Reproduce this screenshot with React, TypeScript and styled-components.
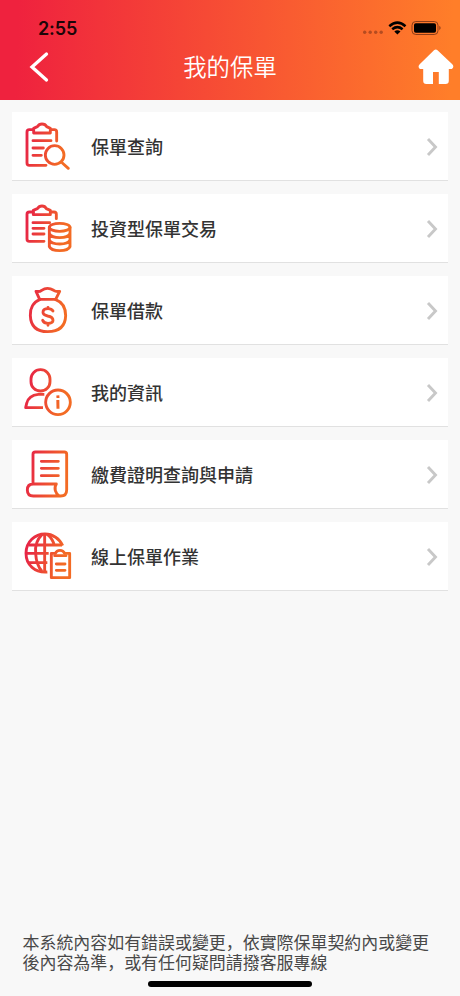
import React from "react";
import styled, { createGlobalStyle } from "styled-components";

const GlobalStyle = createGlobalStyle`
  * { box-sizing: border-box; }
  body {
    margin: 0;
    background: #f8f8f8;
    font-family: "Noto Sans CJK TC", sans-serif;
  }
`;

const Screen = styled.div`
  display: flex;
  flex-direction: column;
  width: 460px;
  height: 996px;
  overflow: hidden;
  background: #f8f8f8;
`;

const Header = styled.header`
  height: 100px;
  background: linear-gradient(92deg, #ef223e 4%, #ff7e29 98%);
`;

const StatusBar = styled.div`
  display: flex;
  justify-content: space-between;
  align-items: center;
  height: 36px;
  padding: 20px 19px 0 38px;
`;

const Clock = styled.span`
  padding-top: 2px;
  font: 600 18px/20px Inter, sans-serif;
  letter-spacing: -0.1px;
  color: #1c0508;
`;

const NavBar = styled.nav`
  display: grid;
  grid-template-columns: 60px 1fr 60px;
  align-items: center;
  height: 64px;
`;

const NavButton = styled.button`
  display: block;
  width: 60px;
  height: 64px;
  padding: 0;
  border: 0;
  background: none;
`;

const Title = styled.h1`
  margin: 0;
  padding-bottom: 3px;
  text-align: center;
  font-size: 23.4px;
  font-weight: 350;
  line-height: 61px;
  color: #fff;
`;

const List = styled.main`
  display: flex;
  flex-direction: column;
  gap: 13px;
  padding: 12px 12px 0;
`;

const Row = styled.div`
  display: flex;
  align-items: center;
  height: 69px;
  background: #fff;
  border-bottom: 1px solid #e1e1e1;
`;

const RowIcon = styled.svg`
  flex: none;
  align-self: flex-start;
  width: 64px;
  height: 69px;
  fill: none;
  stroke: url(#warm);
  stroke-width: 8.6;
  stroke-linecap: round;
  stroke-linejoin: round;
`;

const Label = styled.span`
  flex: 1;
  padding-left: 15px;
  font-size: 18px;
  font-weight: 500;
  line-height: 26px;
  color: #333;
`;

const Chevron = styled.svg`
  flex: none;
  width: 12px;
  height: 20px;
  margin: 1px 10px 0 0;
`;

const Footer = styled.footer`
  display: flex;
  flex-direction: column;
  align-items: center;
  margin-top: auto;
`;

const Notice = styled.p`
  align-self: stretch;
  margin: 0;
  padding: 0 20px 0 22.5px;
  font-family: "Noto Sans CJK SC", sans-serif;
  font-size: 16.95px;
  line-height: 20px;
  white-space: nowrap;
  color: #484848;
`;

const HomeIndicator = styled.div`
  width: 164px;
  height: 6px;
  margin: 9px 0 9px;
  border-radius: 3px;
  background: #000;
`;

const items = [
  {
    label: "保單查詢",
    top: 21,
    art: (
      <>
        <path d="M70 74H58Q51 74 51 81V174Q51 181 58 181H108M122 74H133Q140 74 140 81V108" />
        <path d="M71 84V70L82 65Q87 57 96 57Q106 57 110 65L121 70V84Z" />
        <path d="M69 107H123M69 129H100M69 151H94" />
        <circle cx="134" cy="150" r="28" />
        <path d="M157 174L175 190" />
      </>
    ),
  },
  {
    label: "投資型保單交易",
    top: 18,
    art: (
      <>
        <path d="M70 72H58Q51 72 51 79V153Q51 160 58 160H102M121 72H132Q139 72 139 79V92" />
        <path d="M70 80V67L82 62Q87 54 96 54Q105 54 109 62L121 67V80Z" />
        <path d="M69 104H119M69 121H102M69 138H102" />
        <ellipse cx="149" cy="118" rx="31" ry="12" />
        <path d="M118 118V176Q123 188 149 188T180 176V118M118 137Q123 149 149 149T180 137M118 156Q123 168 149 168T180 156" />
      </>
    ),
  },
  {
    label: "保單借款",
    top: 18,
    art: (
      <>
        <path d="M89 88L78 64Q89 66 95 61Q112 49 131 61Q138 66 149 64L137 88Z" />
        <path d="M89 89C69 97 60 116 61 136C62 170 81 185 113 185C148 185 166 168 167 137C167 112 156 96 137 89" />
        <path d="M129 123Q125 116 114 116Q99 116 99 127Q99 135 113 138Q129 141 129 151Q129 160 114 160Q102 160 98 151M114 112V116M114 160V166" />
      </>
    ),
  },
  {
    label: "我的資訊",
    top: 18,
    art: (
      <>
        <rect x="63" y="53" width="57" height="64" rx="28" />
        <path strokeLinecap="butt" d="M103 127H85Q56 130 50 154L47 167H99" />
        <circle cx="144" cy="151" r="37" />
        <path strokeWidth="9" strokeLinecap="butt" d="M143.5 144L144 170M143.5 130L144 138" />
      </>
    ),
  },
  {
    label: "繳費證明查詢與申請",
    top: 18,
    art: (
      <>
        <path d="M69 149V61Q69 54 76 54H163Q170 54 170 61V168Q170 186 152 186H70Q52 186 52 168Q52 150 70 150H139Q133 159 136 170T148 186" />
        <path d="M94 82H145M94 103H145M94 125H145" />
      </>
    ),
  },
  {
    label: "線上保單作業",
    top: 18,
    art: (
      <>
        <path strokeLinecap="butt" d="M112 168C75 171 48 147 48 112C48 77 75 54 105 54C128 54 149 68 158 89" />
        <path strokeLinecap="butt" d="M104 54V168M97 55Q73 78 77 113Q79 148 96 166M112 55Q128 68 133 88M56 87H156M48 112H116M56 140H112" />
        <path d="M124 112H136Q140 103 150 103Q160 103 164 112H179V185H124Z" />
        <path d="M134 119H168M139 144H165M139 163H165" />
      </>
    ),
  },
];

export default function App() {
  return (
    <Screen>
      <GlobalStyle />
      <Header>
        <StatusBar>
          <Clock>2:55</Clock>
          <svg width="80" height="16" viewBox="361 20 80 16" fill="none">
            <g fill="#b54c20">
              <circle cx="364.7" cy="32.2" r="1.7" />
              <circle cx="370.2" cy="32.2" r="1.7" />
              <circle cx="375.7" cy="32.2" r="1.7" />
              <circle cx="381.2" cy="32.2" r="1.7" />
            </g>
            <g stroke="#000" strokeWidth="2.5">
              <path d="M389.3 26.2Q397.4 19 405.5 26.2" />
              <path d="M392.2 29.3Q397.4 25 402.6 29.3" />
            </g>
            <path fill="#000" d="M394.3 31.5Q397.4 29 400.5 31.5L397.4 34.5Z" />
            <rect x="412" y="21.5" width="26" height="13" rx="3.8" stroke="#8d3d18" />
            <rect x="414" y="23.3" width="22" height="9.4" rx="1.8" fill="#000" />
            <path fill="#8d3d18" d="M439.3 25.8Q442 28 439.3 30.2Z" />
          </svg>
        </StatusBar>
        <NavBar>
          <NavButton aria-label="返回">
            <svg width="60" height="64" viewBox="0 36 60 64" fill="none">
              <path d="M46.5 54L32 67L46.5 80" stroke="#fff" strokeWidth="3.3" strokeLinecap="round" />
            </svg>
          </NavButton>
          <Title>我的保單</Title>
          <NavButton aria-label="首頁">
            <svg width="60" height="64" viewBox="400 36 60 64" fill="#fff">
              <path d="M434 50.3Q435.8 48.8 437.5 50.3L452.3 64.3Q454.6 67 451.8 69H448.8V80.8Q448.8 84 445.6 84H438.8V72H433V84H426.4Q423.2 84 423.2 80.8V69H420Q417.3 67 419.7 64.3Z" />
            </svg>
          </NavButton>
        </NavBar>
      </Header>
      <List>
        {items.map((item) => (
          <Row key={item.label}>
            <RowIcon viewBox={`6 ${item.top} 192 207`}>
              <defs>
                <linearGradient id="warm" gradientUnits="userSpaceOnUse" x1="50" y1="110" x2="160" y2="135">
                  <stop offset="0" stopColor="#e72645" />
                  <stop offset="1" stopColor="#f36b24" />
                </linearGradient>
              </defs>
              {item.art}
            </RowIcon>
            <Label>{item.label}</Label>
            <Chevron viewBox="0 0 12 20" fill="none">
              <path d="M2 2L9.5 10L2 18" stroke="#c8c8c8" strokeWidth="2.9" />
            </Chevron>
          </Row>
        ))}
      </List>
      <Footer>
        <Notice>
          本系統內容如有錯誤或變更，依實際保單契約內或變更
          <br />
          後內容為準，或有任何疑問請撥客服專線
        </Notice>
        <HomeIndicator />
      </Footer>
    </Screen>
  );
}
